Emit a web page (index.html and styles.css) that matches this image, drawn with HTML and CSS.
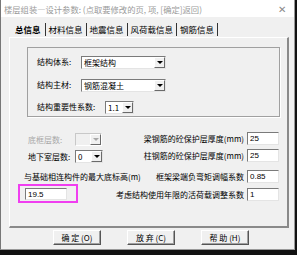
FILE: index.html
```html
<!DOCTYPE html>
<html lang="zh">
<head>
	<meta charset="UTF-8">
	<title>楼层组装—设计参数</title>
	<link rel="stylesheet" href="styles.css">
</head>
<body>
	<div class="win">
		<div class="titlebar">
			<span class="ttl">楼层组装—设计参数: (点取要修改的页, 项, [确定]返回)</span>
			<span class="close">✕</span>
		</div>
		<div class="client">
			<div class="tabs">
				<span class="tab on">总信息</span>
				<span class="tab">材料信息</span>
				<span class="tab">地震信息</span>
				<span class="tab">风荷载信息</span>
				<span class="tab">钢筋信息</span>
			</div>
			<div class="panel">
				<div class="group">
					<div class="row">
						<span class="lbl w44">结构体系:</span>
						<span class="sel w85"><span class="val">框架结构</span><span class="arr"></span></span>
					</div>
					<div class="row r2">
						<span class="lbl w44">结构主材:</span>
						<span class="sel w85"><span class="val">钢筋混凝土</span><span class="arr"></span></span>
					</div>
					<div class="row r3">
						<span class="lbl w68">结构重要性系数:</span>
						<span class="sel w29"><span class="val">1.1</span><span class="arr"></span></span>
					</div>
				</div>

				<div class="lower">
					<div class="cell left">
						<span class="lbl w47 dis">底框层数:</span>
						<span class="sel w27 off"><span class="val"></span><span class="arr"></span></span>
					</div>
					<div class="cell right">
						<span class="lbl">梁钢筋的砼保护层厚度(mm)</span>
						<span class="inp">25</span>
					</div>

					<div class="cell left">
						<span class="lbl w47">地下室层数:</span>
						<span class="sel w28"><span class="val">0</span><span class="arr"></span></span>
					</div>
					<div class="cell right">
						<span class="lbl">柱钢筋的砼保护层厚度(mm)</span>
						<span class="inp">25</span>
					</div>

					<div class="cell left l3">
						<span class="lbl">与基础相连构件的最大底标高(m)</span>
					</div>
					<div class="cell right r3c">
						<span class="lbl">框架梁端负弯矩调幅系数</span>
						<span class="inp">0.85</span>
					</div>

					<div class="cell left l4">
						<div class="mark"><span class="inp w42">19.5</span></div>
					</div>
					<div class="cell right r4c">
						<span class="lbl">考虑结构使用年限的活荷载调整系数</span>
						<span class="inp">1</span>
					</div>
				</div>
			</div>
			<div class="buttons">
				<button class="btn">确 定 (O)</button>
				<button class="btn">放 弃 (C)</button>
				<button class="btn">帮 助 (H)</button>
			</div>
		</div>
	</div>
</body>
</html>
```

FILE: styles.css
```css
*{
	margin: 0;
	padding: 0;
	box-sizing: border-box;
}
body{
	background: #111;
	font-family: "Noto Sans CJK SC", "Liberation Sans", sans-serif;
	font-size: 8px;
	color: #000;
}
.win{
	width: 295px;
	height: 250px;
	background: #f0f0f0;
	border-left: 1px solid #777;
	border-right: 1px solid #999;
	border-bottom: 1px solid #999;
}
.titlebar{
	height: 17px;
	background: #fff;
	display: flex;
	align-items: center;
	justify-content: space-between;
	padding: 0 8px 0 3px;
	color: #9a9a9a;
	font-size: 8.3px;
}
.close{
	font-size: 10px;
	color: #8a8a8a;
}
.tabs{
	display: flex;
	margin: 5px 0 0 10px;
	height: 15px;
	align-items: center;
	font-size: 8.5px;
}
.tab{
	padding: 0 3px;
	line-height: 13px;
	border-right: 1px solid #333;
}
.tab.on{
	padding: 0 4px;
	font-weight: bold;
}
.panel{
	margin-left: 8px;
	width: 280px;
	height: 191px;
	border: 1px solid #fff;
	border-right: 2px solid #8a8a8a;
	border-bottom: 2px solid #8a8a8a;
	padding: 9px 0 0 17px;
}
.group{
	width: 253px;
	height: 70px;
	border: 1px solid #a0a0a0;
	box-shadow: 1px 1px 0 #fff;
	padding: 8px 0 0 9px;
}
.row{
	display: flex;
	align-items: center;
	height: 12px;
}
.r2{
	margin-top: 11px;
}
.r3{
	margin-top: 10px;
}
.lbl{
	white-space: nowrap;
	line-height: 12px;
}
.w44{ width: 44px; }
.w47{ width: 47px; }
.w68{ width: 68px; }
.dis{ color: #a8a8a8; }
.sel{
	display: flex;
	flex-shrink: 0;
	height: 13px;
	background: #fff;
	border: 1px solid;
	border-color: #7a7a7a #e4e4e4 #e4e4e4 #7a7a7a;
}
.sel.off{
	background: #f0f0f0;
	border-color: #c8c8c8 #fff #fff #c8c8c8;
}
.w85{ width: 85px; }
.w29{ width: 29px; }
.w27{ width: 27px; }
.w28{ width: 28px; }
.sel .val{
	flex: 1;
	padding-left: 2px;
	line-height: 11px;
	overflow: hidden;
	white-space: nowrap;
}
.arr{
	width: 11px;
	height: 11px;
	background: #f0f0f0;
	border: 1px solid;
	border-color: #fff #6a6a6a #6a6a6a #fff;
	display: flex;
	align-items: center;
	justify-content: center;
}
.arr::after{
	content: "";
	border-left: 3px solid transparent;
	border-right: 3px solid transparent;
	border-top: 3px solid #000;
}
.sel.off .arr::after{
	border-top-color: #a8a8a8;
}
.lower{
	margin: 15px 0 0 -9px;
	display: grid;
	grid-template-columns: 98px 165px;
	grid-template-rows: 17px 20px 15px 20px;
}
.cell{
	display: flex;
	align-items: flex-start;
}
.left{
	padding: 1px 0 0 10px;
}
.left .lbl{
	line-height: 13px;
}
.left.l3{
	padding: 1px 0 0 6px;
}
.left.l4{
	padding: 0;
}
.right{
	justify-content: flex-end;
	padding-right: 2px;
}
.right .lbl{
	margin-right: 3px;
	line-height: 13px;
}
.r3c{
	padding-top: 1px;
}
.r4c{
	padding-top: 4px;
}
.inp{
	display: block;
	flex-shrink: 0;
	width: 32px;
	height: 13px;
	background: #fff;
	border: 1px solid;
	border-color: #7a7a7a #e4e4e4 #e4e4e4 #7a7a7a;
	padding-left: 2px;
	line-height: 11px;
	font-family: "Liberation Sans", sans-serif;
	font-size: 8px;
}
.mark{
	width: 60px;
	height: 19px;
	border: 2px solid #f03ef0;
	padding: 2px 0 0 5px;
}
.inp.w42{
	width: 42px;
	height: 12px;
}
.buttons{
	display: flex;
	gap: 26px;
	margin: 2px 0 0 52px;
}
.btn{
	width: 48px;
	height: 15px;
	background: #f0f0f0;
	border: 1px solid;
	border-color: #fff #555 #555 #fff;
	box-shadow: inset -1px -1px 0 #a0a0a0;
	font-family: "Noto Sans CJK SC", "Liberation Sans", sans-serif;
	font-size: 8px;
	line-height: 12px;
}
```
